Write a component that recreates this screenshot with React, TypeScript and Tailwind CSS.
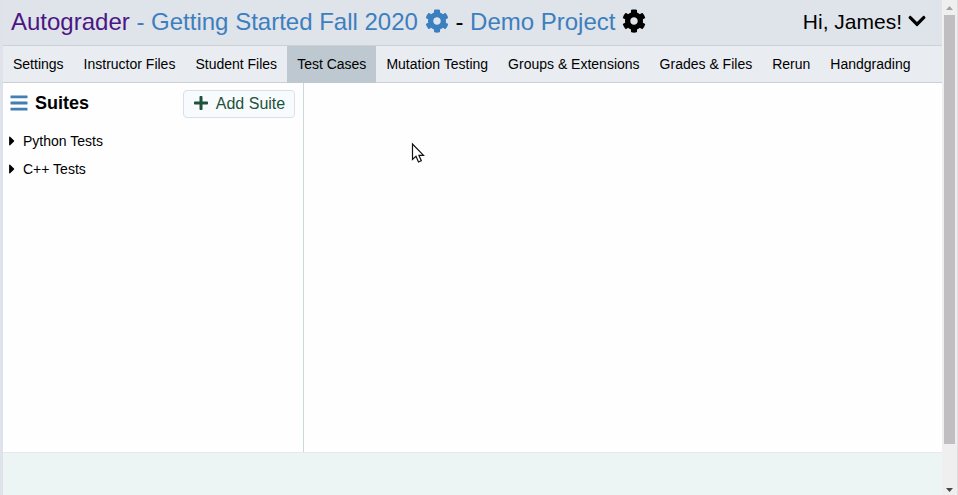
import { FaBars, FaCaretRight, FaChevronDown, FaCog, FaPlus } from "react-icons/fa";

const tabs = [
  "Settings",
  "Instructor Files",
  "Student Files",
  "Test Cases",
  "Mutation Testing",
  "Groups & Extensions",
  "Grades & Files",
  "Rerun",
  "Handgrading",
];

const suites = ["Python Tests", "C++ Tests"];

function Header() {
  return (
    <header className="flex h-[46px] items-center justify-between border-b border-[#cdd0d5] bg-[#dfe3ea] pl-2 pr-[15px] pb-px">
      <div className="flex items-center text-[24px] leading-none whitespace-pre">
        <span className="text-[#4b1782]">Autograder</span>
        <span className="text-[#3d7fbe]"> - Getting Started Fall 2020</span>
        <FaCog className="mb-0.5 ml-[7px] size-6 text-[#3a80c1]" />
        <span className="ml-[6.5px]">- </span>
        <span className="text-[#3d7fbe]">Demo Project</span>
        <FaCog className="mb-0.5 ml-[6.5px] size-6" />
      </div>
      <div className="flex items-center pb-0.5 text-[21px] leading-none">
        Hi, James!
        <FaChevronDown className="ml-[5px] size-5" />
      </div>
    </header>
  );
}

function Tabs() {
  return (
    <nav className="flex h-[37px] shrink-0 border-b border-[#ccd0d5] bg-[#e9edf2] text-[14px]">
      {tabs.map((tab) => (
        <div
          key={tab}
          className={
            tab === "Test Cases"
              ? "-mb-px flex items-center bg-[#bdc8d1] px-2.5 whitespace-nowrap"
              : "-mb-px flex items-center px-2.5 whitespace-nowrap"
          }
        >
          {tab}
        </div>
      ))}
    </nav>
  );
}

function Sidebar() {
  return (
    <aside className="w-[301px] shrink-0 border-r border-[#c9dadd]">
      <div className="flex items-start justify-between pt-[7px] pr-2 pl-2">
        <div className="flex h-[26px] items-center text-[18px] font-bold">
          <FaBars className="mr-2 mb-px h-[18px] w-4 scale-x-110 scale-y-110 text-[#427fb4]" />
          Suites
        </div>
        <button className="flex h-[28px] w-[112px] items-center justify-center rounded border border-[#dae0e8] bg-[#f8fbfd] text-[16px] text-[#1f513b]">
          <FaPlus className="mr-[7px] mb-0.5 size-4" />
          Add Suite
        </button>
      </div>
      <ul className="mt-[9px] text-[14px]">
        {suites.map((suite) => (
          <li key={suite} className="flex h-7 items-center pl-0.5">
            <FaCaretRight className="mr-1 size-[14px] scale-110 text-black" />
            <span className="pt-px">{suite}</span>
          </li>
        ))}
      </ul>
    </aside>
  );
}

function Scrollbar() {
  return (
    <div className="flex w-4 shrink-0 flex-col items-center border-r border-[#dedede] bg-[#f0eff0]">
      <svg className="h-[15px] w-[15px] shrink-0" viewBox="0 0 15 15">
        <path d="M4 10L7.5 6L11 10Z" fill="#a3a2a5" />
      </svg>
      <div className="h-[429px] w-[11px] bg-[#c1bec1]" />
      <svg className="mt-auto h-[11px] w-[15px] shrink-0" viewBox="0 0 15 11">
        <path d="M4 4H11L7.5 8Z" fill="#48474b" />
      </svg>
    </div>
  );
}

function Pointer() {
  return (
    <svg className="absolute top-[142px] left-[411px] h-[23px] w-[15px]" viewBox="0 0 15 23">
      <path
        d="M1.5 2V17.5L5 14.3L7.5 20L10.3 18.8L7.9 13.3H12.5Z"
        fill="white"
        stroke="#111"
        strokeWidth="1.2"
      />
    </svg>
  );
}

export default function App() {
  return (
    <div className="relative flex h-[495px] w-[958px] overflow-hidden bg-white font-['Liberation_Sans',Arial,sans-serif] text-black">
      <div className="w-[3px] shrink-0 bg-[#dfe2eb]" />
      <div className="flex min-w-0 flex-1 flex-col">
        <Header />
        <Tabs />
        <main className="flex h-[369px] shrink-0 bg-[#fefefe]">
          <Sidebar />
          <section className="flex-1" />
        </main>
        <footer className="flex-1 border-t border-[#e4e9eb] bg-[#edf4f4]" />
      </div>
      <Scrollbar />
      <Pointer />
    </div>
  );
}
